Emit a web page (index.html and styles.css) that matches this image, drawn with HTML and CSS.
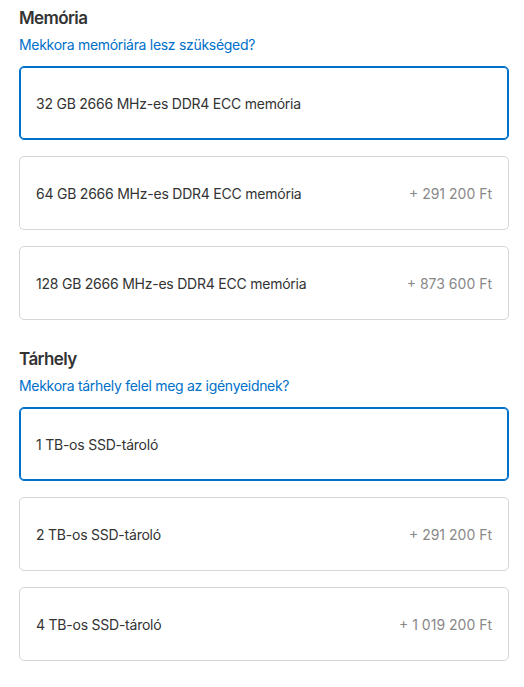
FILE: index.html
```html
<!doctype html>
<html lang="hu">

<head>
    <meta charset="UTF-8">
    <title>Konfiguráció</title>
    <link rel="stylesheet" href="styles.css">
</head>

<body>
    <div class="page">
        <section class="group">
            <h2 class="group-title">Memória</h2>
            <a class="group-help" href="#">Mekkora memóriára lesz szükséged?</a>
            <div class="options">
                <label class="option selected">
                    <span class="option-name">32 GB 2666 MHz-es DDR4 ECC memória</span>
                </label>
                <label class="option">
                    <span class="option-name">64 GB 2666 MHz-es DDR4 ECC memória</span>
                    <span class="option-price">+ 291 200 Ft</span>
                </label>
                <label class="option">
                    <span class="option-name">128 GB 2666 MHz-es DDR4 ECC memória</span>
                    <span class="option-price">+ 873 600 Ft</span>
                </label>
            </div>
        </section>

        <section class="group">
            <h2 class="group-title">Tárhely</h2>
            <a class="group-help" href="#">Mekkora tárhely felel meg az igényeidnek?</a>
            <div class="options">
                <label class="option selected">
                    <span class="option-name">1 TB-os SSD-tároló</span>
                </label>
                <label class="option">
                    <span class="option-name">2 TB-os SSD-tároló</span>
                    <span class="option-price">+ 291 200 Ft</span>
                </label>
                <label class="option">
                    <span class="option-name">4 TB-os SSD-tároló</span>
                    <span class="option-price">+ 1 019 200 Ft</span>
                </label>
            </div>
        </section>
    </div>
</body>
</html>
```

FILE: styles.css
```css
body {
    margin: 0;
    background-color: #fff;
    font-family: Inter, "Noto Sans", sans-serif;
    color: #333;
}

.page {
    width: 490px;
    padding: 7px 0 0 19px;
}

.group {
    display: flex;
    flex-direction: column;
    margin-bottom: 28px;
}

.group-title {
    margin: 0;
    font-size: 17px;
    line-height: 22px;
    font-weight: 600;
    letter-spacing: -0.6px;
    color: #333;
}

.group-help {
    margin-top: 6px;
    font-size: 14px;
    line-height: 20px;
    letter-spacing: -0.3px;
    color: #0070c9;
    text-decoration: none;
}

.options {
    display: flex;
    flex-direction: column;
    gap: 16px;
    margin-top: 11px;
}

.option {
    display: flex;
    justify-content: space-between;
    align-items: center;
    height: 74px;
    box-sizing: border-box;
    padding: 0 16px;
    border: 1px solid #d6d6d6;
    border-radius: 5px;
    font-size: 14px;
    cursor: pointer;
}

.option.selected {
    border-color: #0070c9;
    box-shadow: inset 0 0 0 1px #0070c9;
}

.option-name {
    color: #333;
    letter-spacing: -0.23px;
}

.option-price {
    color: #888;
}
```
